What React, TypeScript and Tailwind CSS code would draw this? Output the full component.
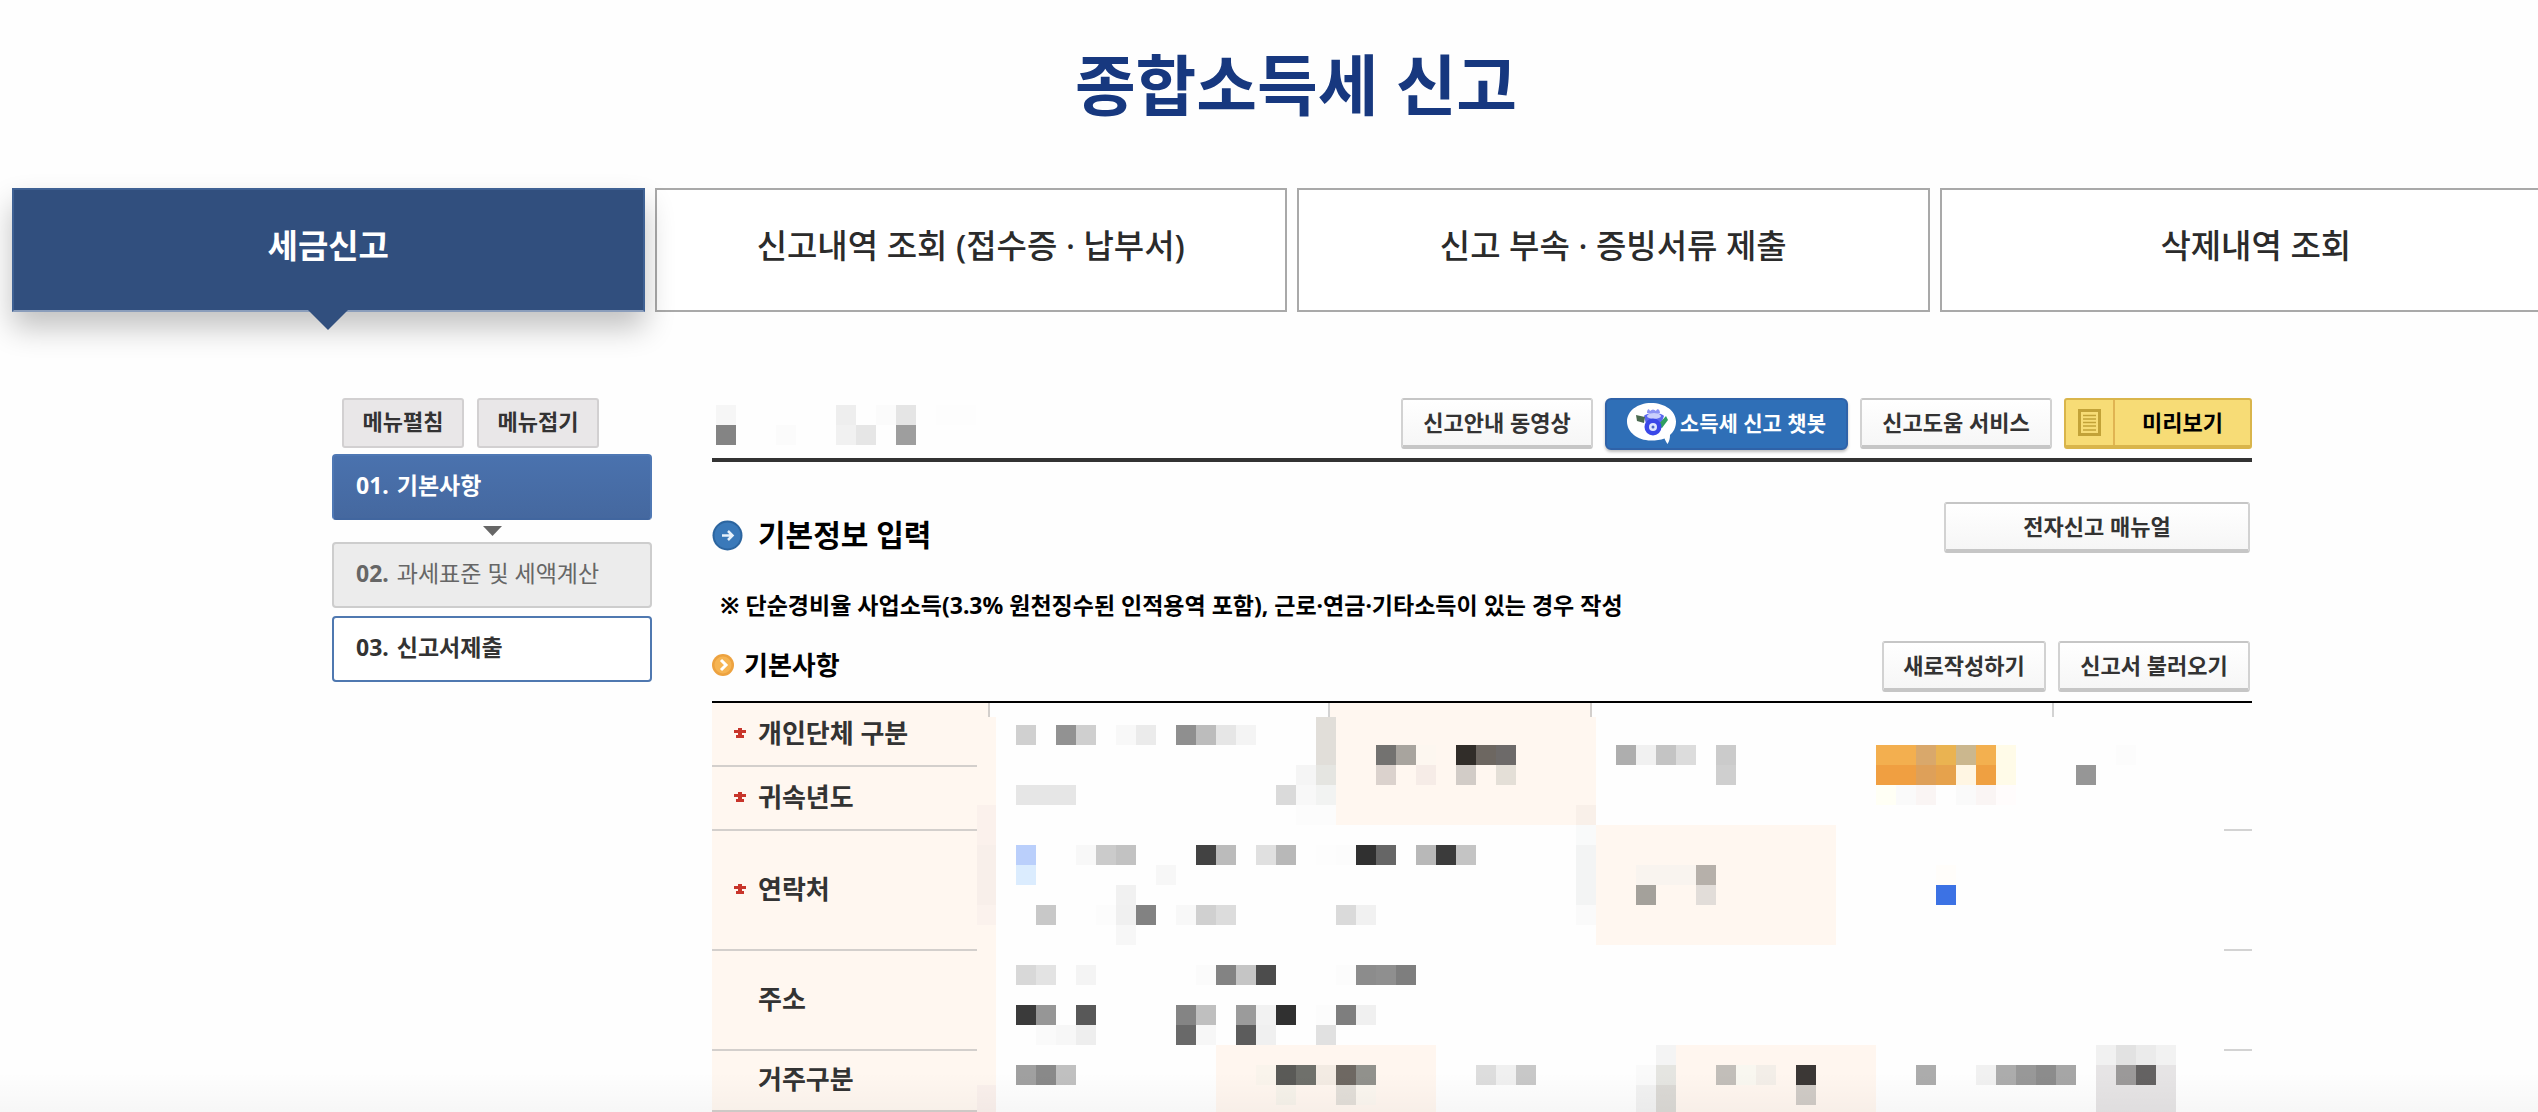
import React from "react";
import type { ReactNode } from "react";

// Redaction blocks: column, row, fill, columns wide, rows high (20px grid).
type Block = [number, number, string, number?, number?];

const TABLE_BLOCKS: Block[] = [
  // tinted header areas
  [0, 0, "#fff7f0", 1, 21],
  [18, 0, "#fff7f0", 13, 6],
  [31, 6, "#fff7f0", 12, 6],
  [12, 17, "#fff6ef", 11, 4],
  [35, 17, "#fff6ef", 10, 4],
  // first column edge
  [0, 5, "#fbf1ec", 1, 2],
  [0, 7, "#f8efea", 1, 3],
  [0, 10, "#fbf2ed"],
  [0, 19, "#faf0ec", 1, 2],
  // first row
  [2, 1, "#d0d0d0"], [4, 1, "#929292"], [5, 1, "#cfcfcf"], [7, 1, "#f8f8f8"], [8, 1, "#ebebeb"],
  [10, 1, "#8f8f8f"], [11, 1, "#bcbcbc"], [12, 1, "#e6e6e6"], [13, 1, "#f4f4f4"],
  [17, 0, "#e1ded9", 1, 3], [16, 3, "#f5f5f5"], [17, 3, "#e5e5e1"],
  [20, 2, "#737270"], [21, 2, "#a8a49e"], [22, 2, "#fdf7f0"], [24, 2, "#312d29"], [25, 2, "#6d6761"], [26, 2, "#6d6a69"],
  [20, 3, "#dbd2cd"], [22, 3, "#f6ece7"], [24, 3, "#d2ccc7"], [26, 3, "#e4dfd7"],
  [32, 2, "#aeaeae"], [33, 2, "#f1f1f1"], [34, 2, "#c4c4c4"], [35, 2, "#dcdcdc"], [37, 2, "#cbcbcb"], [37, 3, "#cfcfcf"],
  [45, 2, "#f3af4f", 2, 1], [47, 2, "#d9a86b"], [48, 2, "#eab351"], [49, 2, "#cbb78e"], [50, 2, "#f3b04f"], [51, 2, "#fffbe8", 1, 2],
  [45, 3, "#f09f41", 2, 1], [47, 3, "#dea059"], [48, 3, "#e6a24c"], [49, 3, "#fff6e3"], [50, 3, "#efa041"],
  [45, 4, "#fffff5"], [46, 4, "#fafafa"], [47, 4, "#faf5f4"], [49, 4, "#fafafa"], [50, 4, "#faf5f4"], [51, 4, "#fffcfc"],
  [57, 2, "#fcfcfc"], [55, 3, "#969696"],
  // second row
  [2, 4, "#e6e6e6", 3, 1], [15, 4, "#dadada"], [16, 4, "#f8f8f8"], [17, 4, "#f2f3f2"], [16, 5, "#fcfcfc", 2, 1],
  [30, 5, "#f9f0e9"], [30, 6, "#f9fafa"], [30, 7, "#f3f4f4", 1, 3], [30, 10, "#fafafa"],
  // contact rows
  [2, 7, "#bacffb"], [2, 8, "#dbecfe"], [5, 7, "#f8f8f8"], [6, 7, "#cbcbcb"], [7, 7, "#c2c2c2"],
  [11, 7, "#424242"], [12, 7, "#bbbbbb"], [14, 7, "#e0e0e0"], [15, 7, "#b8b8b8"],
  [17, 7, "#fdfdfd"], [18, 7, "#fcfcfc"], [19, 7, "#303030"], [20, 7, "#666666"], [22, 7, "#b8b8b8"], [23, 7, "#3b3b3b"], [24, 7, "#c4c4c4"],
  [9, 8, "#f7f7f7"], [7, 9, "#f1f1f1"],
  [33, 8, "#f9f4ef", 3, 1], [36, 8, "#b6b0aa"], [33, 9, "#a4a19b"], [36, 9, "#e2ddd9"],
  [48, 8, "#fffdfa"], [48, 9, "#3c72e4"],
  [3, 10, "#c8c8c8"], [6, 10, "#fcfcfc"], [7, 10, "#f0f0f0"], [8, 10, "#828282"], [10, 10, "#f8f8f8"], [11, 10, "#d0d0d0"], [12, 10, "#dcdcdc"],
  [18, 10, "#dadada"], [19, 10, "#f1f1f1"], [7, 11, "#f7f7f7"],
  // address rows
  [2, 13, "#d8d8d8"], [3, 13, "#e3e3e3"], [5, 13, "#f4f4f4"], [11, 13, "#fbfbfb"], [12, 13, "#838383"], [13, 13, "#c5c5c5"], [14, 13, "#4c4c4c"],
  [18, 13, "#fcfcfc"], [19, 13, "#8c8c8c"], [20, 13, "#8f8f8f"], [21, 13, "#7e7e7e"],
  [2, 15, "#3a3a3a"], [3, 15, "#969696"], [5, 15, "#585858"], [10, 15, "#848484"], [11, 15, "#bfbfbf"], [13, 15, "#9b9b9b"], [14, 15, "#f2f2f2"], [15, 15, "#303030"],
  [17, 15, "#fcfcfc"], [18, 15, "#7e7e7e"], [19, 15, "#f0f0f0"],
  [3, 16, "#fafafa"], [4, 16, "#f7f7f7"], [5, 16, "#eeeeee"], [10, 16, "#696969"], [11, 16, "#f7f7f7"], [13, 16, "#5c5c5c"], [14, 16, "#f0f0f0"], [17, 16, "#e1e1e1"],
  // residence row
  [2, 18, "#a0a0a0"], [3, 18, "#898989"], [4, 18, "#c0c0c0"],
  [14, 18, "#faf4ec"], [15, 18, "#5a5a57"], [16, 18, "#6f706b"], [17, 18, "#f3ebe3"], [18, 18, "#6e6862"], [19, 18, "#91918c"],
  [15, 19, "#f6f2ea"], [18, 19, "#e2ded8"], [19, 19, "#fbf6ef"],
  [25, 18, "#dddddd"], [26, 18, "#f0f0f0"], [27, 18, "#c8c8c8"],
  [34, 17, "#f4f4f4"], [33, 18, "#fafafa"], [34, 18, "#e5e5e1"], [33, 19, "#f2f2f2", 1, 2], [34, 19, "#dbd9d5", 1, 2],
  [37, 18, "#c2beb9"], [38, 18, "#f9f7f0"], [39, 18, "#f3eee8"], [41, 18, "#3b3735"], [41, 19, "#d0cbc6"],
  [47, 18, "#acacac"], [50, 18, "#f1f1f1"], [51, 18, "#acacac"], [52, 18, "#989898"], [53, 18, "#8c8c8c"], [54, 18, "#a6a6a6"],
  [56, 17, "#f1f1f1"], [57, 17, "#e2e2e2"], [58, 17, "#ebebeb"], [59, 17, "#f2f2f2"],
  [56, 18, "#e6e4e5", 4, 3], [57, 18, "#9b9999"], [58, 18, "#646262"],
];

const NAME_BLOCKS: Block[] = [
  [0, 0, "#f6f6f6"], [0, 1, "#848484"], [3, 1, "#fbfbfb"], [6, 0, "#eeeeee"], [6, 1, "#f1f1f1"],
  [7, 1, "#e6e6e6"], [8, 0, "#fbfbfb"], [9, 0, "#e5e5e5"], [9, 1, "#9e9e9e"], [11, 0, "#fdfdfd", 2, 1],
];

function Blocks({ items }: { items: Block[] }) {
  return (
    <>
      {items.map(([c, r, fill, w = 1, h = 1], i) => (
        <rect key={i} x={c * 20} y={r * 20} width={w * 20} height={h * 20} fill={fill} />
      ))}
    </>
  );
}

function GrayButton({ children, className }: { children: ReactNode; className: string }) {
  return (
    <button
      type="button"
      className={`h-[51px] shrink-0 whitespace-nowrap rounded-[3px] border-2 border-b-4 border-[#c6c6c6] border-x-[#d2d2d2] bg-linear-to-b from-white to-[#f6f6f6] pb-[2px] text-[22px] leading-8 font-bold text-[#333] ${className}`}
    >
      {children}
    </button>
  );
}

function ChatbotIcon() {
  return (
    <svg width="50" height="42" viewBox="0 0 50 42" aria-hidden="true">
      <path d="M24 0C38 0 49 8 49 18.500c0 6-2.500 10.500-6 13.500 0 3-.5 6-2.500 9-1.500-2-2-3.500-3-5.500-4 1.500-8.500 2-13.500 2C10.500 37.500 0 29 0 18.500S10.500 0 24 0Z" fill="#fff" />
      <path d="M20 10c0-4 2-5 3-2 2-2 4-2 6 0 1-3 4-2 4 2Z" fill="#8b92f4" />
      <path d="M17 13c3-4 17-4 20 0l-3 8H19Z" fill="#5a66ee" />
      <ellipse cx="27" cy="13" rx="7" ry="3" fill="#c9cefb" />
      <path d="M9 12l9 2-1 6-7-2Z" fill="#4a6a50" />
      <path d="M39 13l2 4-6 8-5-2Z" fill="#2f9e60" />
      <circle cx="26" cy="24" r="8.500" fill="#3a48e8" />
      <circle cx="26" cy="24" r="4" fill="#dfe6ff" />
      <circle cx="26" cy="24" r="1.500" fill="#4b66c8" />
    </svg>
  );
}

function DocIcon() {
  return (
    <svg width="23" height="27" viewBox="0 0 23 27" fill="none" stroke="#c2a238" aria-hidden="true">
      <rect x="1.500" y="1.500" width="20" height="24" strokeWidth="3" />
      <path d="M5 6.500h13M5 10h13M5 13.500h13M5 17h13M5 21h13" strokeWidth="1.500" />
    </svg>
  );
}

function ArrowBadge() {
  return (
    <svg width="31" height="31" viewBox="0 0 31 31" aria-hidden="true">
      <circle cx="15.500" cy="15.500" r="15" fill="#2c659f" />
      <circle cx="15.500" cy="15.500" r="13" fill="#3a79b9" />
      <path d="M10 15.500h10M16 11l4.500 4.500L16 20" fill="none" stroke="#e8f2fb" strokeWidth="2.500" />
    </svg>
  );
}

function ChevronBadge() {
  return (
    <svg width="22" height="22" viewBox="0 0 22 22" aria-hidden="true">
      <circle cx="11" cy="11" r="11" fill="#eda23f" />
      <circle cx="11" cy="11" r="8.500" fill="#f6b452" />
      <path d="M9 6l5 5-5 5" fill="none" stroke="#fff" strokeWidth="3" />
    </svg>
  );
}

function RequiredMark() {
  return (
    <svg width="12" height="10" viewBox="0 0 12 10" role="img" aria-label="필수">
      <path d="M4 0h4v2h4v3H8v2h2v3H2V7h2V5H0V2h4Z" fill="#c8352b" />
    </svg>
  );
}

function RowHead({ children, required = false }: { children: ReactNode; required?: boolean }) {
  return (
    <th scope="row" className="border-r-2 border-b-2 border-[#d3cfcc] bg-[#fff7f0] p-0 pb-[3px] text-left">
      <span className="flex items-center pl-[22px] text-[26px] leading-9 font-bold text-[#333]">
        <span className="flex w-6 shrink-0">{required && <RequiredMark />}</span>
        {children}
      </span>
    </th>
  );
}

const CELL = "border-r-2 border-b-2 border-[#d3d3d3] p-0";
const LAST = "border-b-2 border-[#d3d3d3] p-0";
const HEAD = "border-r-2 border-b-2 border-[#d3cfcc] bg-[#fff7f0] p-0";

const TABS = ["세금신고", "신고내역 조회 (접수증 · 납부서)", "신고 부속 · 증빙서류 제출", "삭제내역 조회"];

export default function App() {
  return (
    <div className="relative min-h-screen overflow-hidden bg-[#fefefe] font-['Noto_Sans','Noto_Sans_CJK_KR',sans-serif] break-keep">
      <div className="-mr-[46px]">
        <h1 className="h-[188px] pt-10 pl-2 text-center text-[66px] leading-[88px] font-bold text-[#17387f]">종합소득세 신고</h1>

        <nav className="grid grid-cols-4 gap-[10px] px-3">
          {TABS.map((label, i) => (
            <button
              key={label}
              type="button"
              aria-current={i === 0 ? "page" : undefined}
              className={
                i === 0
                  ? "relative h-[124px] border-2 border-[#3f6193] border-b-[#8a9dbb] bg-[#314f7e] pb-2 text-[33px] font-bold text-white shadow-[0_16px_28px_rgba(0,0,0,0.24)]"
                  : "h-[124px] border-2 border-[#a9a9a9] bg-white pb-2 text-[33px] font-medium text-[#2b2b2b]"
              }
            >
              {label}
              {i === 0 && (
                <svg className="absolute top-full left-1/2 -translate-x-1/2" width="40" height="20" viewBox="0 0 40 20" aria-hidden="true">
                  <path d="M0 0h40L20 20Z" fill="#314f7e" />
                </svg>
              )}
            </button>
          ))}
        </nav>

        <div className="mx-auto mt-[86px] flex max-w-[1920px] gap-[60px]">
          <aside className="w-80 shrink-0">
            <div className="flex gap-[13px] pl-[10px]">
              {["메뉴펼침", "메뉴접기"].map((t) => (
                <button key={t} type="button" className="h-[50px] w-[122px] rounded-[3px] border-2 border-[#d2d0d1] bg-[#e9e7e8] pb-1 text-[22px] leading-8 font-bold text-[#333]">
                  {t}
                </button>
              ))}
            </div>
            <nav className="mt-[6px] flex flex-col items-center text-[23px] leading-8">
              <a href="#step1" aria-current="step" className="flex h-[66px] w-full items-center gap-2 rounded-[4px] border-2 border-[#4f78b4] border-b-[#41669f] bg-linear-to-b from-[#4a72ae] to-[#45689f] px-[22px] pb-1 font-bold text-white">
                <span>01.</span>기본사항
              </a>
              <svg className="my-[6px]" width="19" height="10" viewBox="0 0 19 10" aria-hidden="true">
                <path d="M0 0h19L9.500 10Z" fill="#666" />
              </svg>
              <a href="#step2" className="flex h-[66px] w-full items-center gap-2 rounded-[4px] border-2 border-[#cdcdcd] bg-[#ececec] px-[22px] pb-1 text-[#666]">
                <span className="font-bold">02.</span>과세표준 및 세액계산
              </a>
              <a href="#step3" className="mt-2 flex h-[66px] w-full items-center gap-2 rounded-[4px] border-2 border-[#4f78b0] bg-white px-[22px] pb-1 font-bold text-[#333]">
                <span>03.</span>신고서제출
              </a>
            </nav>
          </aside>

          <main className="min-w-0 flex-1">
            <div className="flex h-16 items-start justify-between border-b-4 border-[#333] pl-1">
              <svg className="mt-[7px]" width="260" height="40" viewBox="0 0 260 40" shapeRendering="crispEdges" aria-hidden="true">
                <Blocks items={NAME_BLOCKS} />
              </svg>
              <div className="flex gap-3">
                <GrayButton className="w-[192px]">신고안내 동영상</GrayButton>
                <button type="button" className="flex h-[52px] w-[243px] items-center justify-between rounded-md border-2 border-[#2f62a8] bg-[#2f6fb7] px-5 text-[21px] leading-8 font-bold whitespace-nowrap text-white shadow-[0_2px_3px_rgba(0,0,0,0.25)]">
                  <ChatbotIcon />
                  <span className="pb-[2px]">소득세 신고 챗봇</span>
                </button>
                <GrayButton className="w-[192px]">신고도움 서비스</GrayButton>
                <button type="button" className="flex h-[51px] w-[188px] items-stretch rounded-[3px] border-2 border-b-4 border-[#d9b54b] bg-[#f7dc76] text-[22px] leading-8 font-bold text-black">
                  <span className="flex w-[49px] items-center justify-center border-r-2 border-[#e0b452]">
                    <DocIcon />
                  </span>
                  <span className="flex flex-1 items-center justify-center pb-[2px]">미리보기</span>
                </button>
              </div>
            </div>

            <section>
              <div className="mt-10 flex items-start justify-between">
                <h2 className="flex items-center gap-[15px] pt-[15px] text-[30px] leading-9 font-bold text-black">
                  <ArrowBadge />
                  기본정보 입력
                </h2>
                <GrayButton className="mr-[2px] w-[306px]">전자신고 매뉴얼</GrayButton>
              </div>
              <p className="mt-9 pl-2 text-[23px] leading-8 font-bold text-black">
                ※ 단순경비율 사업소득(3.3% 원천징수된 인적용역 포함), 근로·연금·기타소득이 있는 경우 작성
              </p>

              <div className="mt-5 flex items-center justify-between">
                <h3 className="flex items-center gap-[10px] pb-[3px] text-[26px] leading-9 font-bold text-black">
                  <ChevronBadge />
                  기본사항
                </h3>
                <div className="mr-[2px] flex gap-3">
                  <GrayButton className="w-[164px]">새로작성하기</GrayButton>
                  <GrayButton className="w-[192px]">신고서 불러오기</GrayButton>
                </div>
              </div>

              <div className="relative mt-[9px]">
                <table className="w-full table-fixed border-separate border-spacing-0 border-t-2 border-black">
                  <colgroup>
                    <col className="w-[278px]" />
                    <col className="w-[340px]" />
                    <col className="w-[262px]" />
                    <col className="w-[462px]" />
                    <col />
                  </colgroup>
                  <tbody>
                    <tr className="h-16">
                      <RowHead required>개인단체 구분</RowHead>
                      <td className={CELL} />
                      <td rowSpan={2} className={HEAD} />
                      <td rowSpan={2} className={CELL} />
                      <td rowSpan={2} className={LAST} />
                    </tr>
                    <tr className="h-16">
                      <RowHead required>귀속년도</RowHead>
                      <td className={CELL} />
                    </tr>
                    <tr className="h-[120px]">
                      <RowHead required>연락처</RowHead>
                      <td className={CELL} />
                      <td className={HEAD} />
                      <td colSpan={2} className={LAST} />
                    </tr>
                    <tr className="h-[100px]">
                      <RowHead>주소</RowHead>
                      <td colSpan={4} className={LAST} />
                    </tr>
                    <tr className="h-[61px]">
                      <RowHead>거주구분</RowHead>
                      <td colSpan={4} className="p-0" />
                    </tr>
                  </tbody>
                </table>
                <svg className="absolute top-4 left-[265px]" width="1247" height="395" viewBox="1 12 1247 395" shapeRendering="crispEdges" aria-hidden="true">
                  <rect x="0" y="0" width="1248" height="420" fill="#fefefe" />
                  <Blocks items={TABLE_BLOCKS} />
                </svg>
              </div>
            </section>
          </main>
        </div>
      </div>
      <div className="pointer-events-none absolute inset-x-0 bottom-0 h-10 bg-linear-to-b from-transparent to-black/3" />
    </div>
  );
}
